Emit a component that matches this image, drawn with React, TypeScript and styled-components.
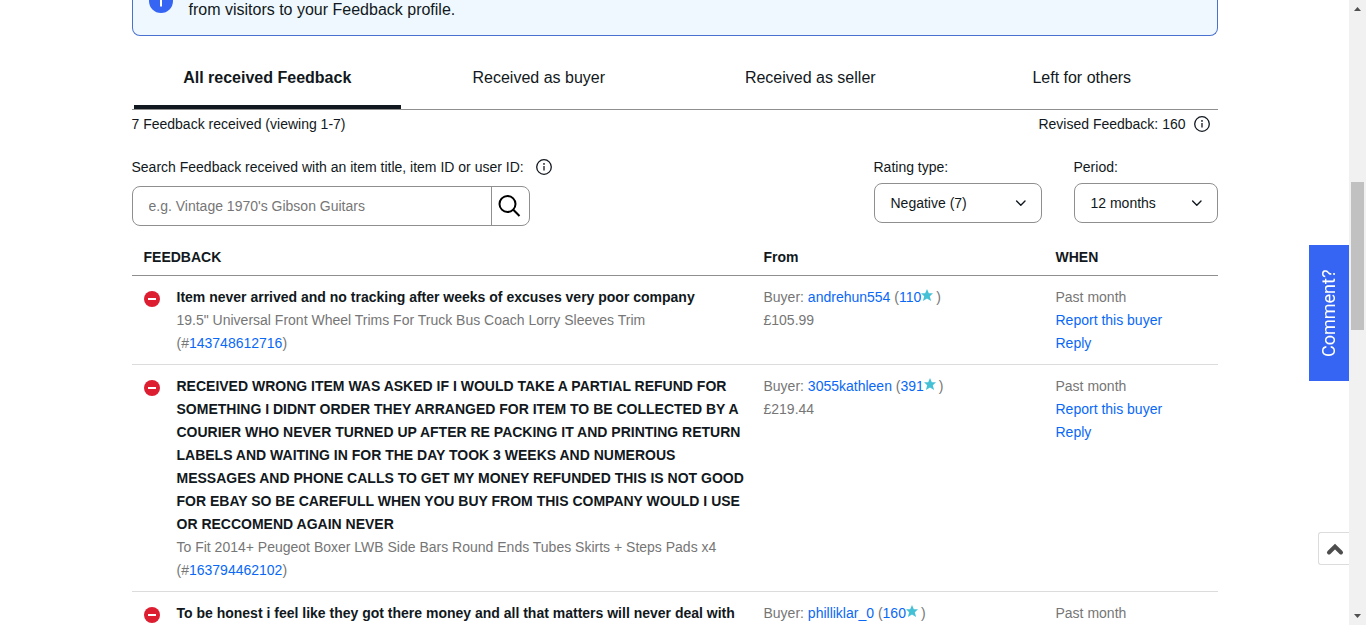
import React from 'react';
import styled, { createGlobalStyle } from 'styled-components';

const GlobalStyle = createGlobalStyle`
  *, *::before, *::after { box-sizing: border-box; }
  body {
    margin: 0;
    overflow: hidden;
    background: #fff;
    color: #111820;
    font: 14px/23px "Liberation Sans", Arial, sans-serif;
  }
  a { color: #0968f6; text-decoration: none; }
  button, input, select { font: inherit; color: inherit; margin: 0; }
`;

const Viewport = styled.div`
  display: flex;
  height: 100vh;
  overflow: hidden;
`;

const Page = styled.main`
  flex: 1;
  min-width: 0;
  max-width: 1086px;
  margin: 0 auto;
`;

const Banner = styled.section`
  display: flex;
  align-items: flex-end;
  gap: 16px;
  height: 36px;
  padding: 0 16px 13px;
  overflow: hidden;
  border: 1px solid #4a70d0;
  border-top: 0;
  border-radius: 0 0 8px 8px;
  background: #f0f8ff;
  font-size: 16px;
  line-height: 24px;

  svg { flex: none; margin-bottom: 9px; }
  p { margin: 0; }
`;

const Tabs = styled.div`
  display: grid;
  grid-template-columns: repeat(4, 1fr);
  margin-top: 10px;
  border-bottom: 1px solid #8f8f8f;
`;

const Tab = styled.button<{ $active?: boolean }>`
  height: 63px;
  margin: 0 2px;
  padding: 4px 0 0;
  border: 0;
  border-bottom: 4px solid ${p => (p.$active ? '#111820' : 'transparent')};
  background: none;
  font-size: 16px;
  font-weight: ${p => (p.$active ? 700 : 400)};
`;

const Summary = styled.div`
  display: flex;
  justify-content: space-between;
  padding: 3px 8px 0 0;
`;

const WithIcon = styled.span<{ $gap: number }>`
  display: flex;
  align-items: center;
  gap: ${p => p.$gap}px;
  white-space: nowrap;

  svg { flex: none; margin-bottom: 1px; }
`;

const Filters = styled.form`
  display: flex;
  gap: 32px;
  margin-top: 20px;
`;

const Field = styled.div<{ $width: number; $gap: number; $push?: boolean }>`
  display: flex;
  flex-direction: column;
  gap: ${p => p.$gap}px;
  width: ${p => p.$width}px;
  margin-right: ${p => (p.$push ? 'auto' : 0)};
`;

const SearchBox = styled.div`
  display: flex;
  width: 398px;
  height: 40px;
  overflow: hidden;
  border: 1px solid #8f8f8f;
  border-radius: 8px;
`;

const SearchInput = styled.input`
  flex: 1;
  min-width: 0;
  padding: 0 16px;
  border: 0;
  outline: 0;
  background: none;

  &::placeholder { color: #767676; opacity: 1; }
`;

const SearchButton = styled.button`
  display: flex;
  align-items: center;
  justify-content: center;
  width: 38px;
  padding: 0;
  border: 0;
  border-left: 1px solid #8f8f8f;
  background: none;
`;

const SelectBox = styled.div`
  display: grid;
  align-items: center;

  > * { grid-area: 1 / 1; }
  svg { justify-self: end; margin-right: 15px; pointer-events: none; }
`;

const Select = styled.select`
  width: 100%;
  height: 40px;
  padding: 0 36px 0 16px;
  border: 1px solid #8f8f8f;
  border-radius: 8px;
  background: #fff;
  appearance: none;
`;

const Table = styled.table`
  width: 100%;
  margin-top: 10px;
  border-collapse: separate;
  border-spacing: 0;
  table-layout: fixed;
`;

const FromCol = styled.col` width: 292px; `;
const WhenCol = styled.col` width: 174px; `;

const HeadCell = styled.th`
  padding: 10px 12px 6px;
  border-bottom: 1px solid #8f8f8f;
  text-align: left;
`;

const Cell = styled.td`
  padding: 10px 0 9px 12px;
  border-bottom: 1px solid #dcdcdc;
  color: #767676;
  vertical-align: top;
`;

const Entry = styled.div`
  display: flex;
  gap: 17px;

  > svg { flex: none; margin-top: 5px; }
`;

const Comment = styled.div`
  color: #111820;
  font-weight: 700;
`;

const Stack = styled.div`
  display: flex;
  flex-direction: column;
  align-items: flex-start;
`;

const StarIcon = styled.svg`
  margin-right: 3px;
  vertical-align: 1px;
`;

const CommentTab = styled.button`
  position: fixed;
  right: 17px;
  top: 50%;
  width: 40px;
  height: 136px;
  padding: 0;
  border: 0;
  background: #3665f3;
  color: #fff;
  font: 400 18px/40px Roboto, sans-serif;
  writing-mode: vertical-rl;
  transform: translateY(-50%) rotate(180deg);
`;

const BackToTop = styled.button`
  position: fixed;
  right: 17px;
  bottom: 60px;
  display: flex;
  align-items: center;
  justify-content: center;
  width: 31px;
  height: 33px;
  padding: 0 0 0 2px;
  border: 1px solid #dcdcdc;
  border-right: 0;
  border-radius: 3px 0 0 3px;
  background: #fff;
`;

const ScrollTrack = styled.div`
  display: flex;
  flex-direction: column;
  align-items: center;
  width: 17px;
  padding: 6px 0;
  background: #f1f1f1;
`;

const ScrollSpace = styled.div<{ $grow: number }>`
  flex: ${p => p.$grow} 1 0;
`;

const ScrollThumb = styled(ScrollSpace)`
  width: 13px;
  background: #c1c1c1;
`;

const InfoIcon = () => (
  <svg width="16" height="16" viewBox="0 0 16 16" aria-hidden="true">
    <circle cx="8" cy="8" r="7.3" fill="none" stroke="#111820" strokeWidth="1.3" />
    <path d="M8 7v4.500" stroke="#111820" strokeWidth="1.3" />
    <circle cx="8" cy="4.9" r="0.9" fill="#111820" />
  </svg>
);

const NegativeIcon = () => (
  <svg width="16" height="16" viewBox="0 0 16 16" role="img" aria-label="Negative feedback">
    <circle cx="8" cy="8" r="8" fill="#dd1e31" />
    <path d="M4 8h8" stroke="#fff" strokeWidth="2" />
  </svg>
);

const Chevron = () => (
  <svg width="12" height="8" viewBox="0 0 12 8" aria-hidden="true">
    <path d="M1.6 2 5.800 6.200l4.200-4.200" fill="none" stroke="#111820" strokeWidth="1.4" strokeLinecap="round" strokeLinejoin="round" />
  </svg>
);

const Star = () => (
  <StarIcon width="12" height="12" viewBox="0 0 12 12" aria-hidden="true">
    <path d="M6 0l1.800 4.200H12L8.800 7.200l1.300 4.800L6 9.500 1.900 12l1.300-4.800L0 4.200h4.200z" fill="#45c1d6" />
  </StarIcon>
);

const ScrollArrow = ({ down }: { down?: boolean }) => (
  <svg width="7" height="5" viewBox="0 0 7 5" aria-hidden="true">
    <path d={down ? 'M0 0h7L3.500 4z' : 'M0 5h7L3.500 1z'} fill="#505050" />
  </svg>
);

interface Feedback {
  comment: string;
  item?: string;
  itemId?: string;
  buyer: string;
  score: number;
  price?: string;
}

const feedback: Feedback[] = [
  {
    comment: 'Item never arrived and no tracking after weeks of excuses very poor company',
    item: '19.5" Universal Front Wheel Trims For Truck Bus Coach Lorry Sleeves Trim',
    itemId: '143748612716',
    buyer: 'andrehun554',
    score: 110,
    price: '£105.99',
  },
  {
    comment:
      'RECEIVED WRONG ITEM WAS ASKED IF I WOULD TAKE A PARTIAL REFUND FOR SOMETHING I DIDNT ORDER THEY ARRANGED FOR ITEM TO BE COLLECTED BY A COURIER WHO NEVER TURNED UP AFTER RE PACKING IT AND PRINTING RETURN LABELS AND WAITING IN FOR THE DAY TOOK 3 WEEKS AND NUMEROUS MESSAGES AND PHONE CALLS TO GET MY MONEY REFUNDED THIS IS NOT GOOD FOR EBAY SO BE CAREFULL WHEN YOU BUY FROM THIS COMPANY WOULD I USE OR RECCOMEND AGAIN NEVER',
    item: 'To Fit 2014+ Peugeot Boxer LWB Side Bars Round Ends Tubes Skirts + Steps Pads x4',
    itemId: '163794462102',
    buyer: '3055kathleen',
    score: 391,
    price: '£219.44',
  },
  {
    comment: 'To be honest i feel like they got there money and all that matters will never deal with',
    buyer: 'philliklar_0',
    score: 160,
  },
];

export default function App() {
  return (
    <>
      <GlobalStyle />
      <Viewport>
        <Page>
          <Banner>
            <svg width="24" height="24" viewBox="0 0 24 24" aria-hidden="true">
              <circle cx="12" cy="12" r="12" fill="#3665f3" />
              <path d="M12 10v7.500" stroke="#fff" strokeWidth="2" />
              <circle cx="12" cy="7" r="1.300" fill="#fff" />
            </svg>
            <p>from visitors to your Feedback profile.</p>
          </Banner>

          <Tabs role="tablist">
            <Tab role="tab" aria-selected="true" $active>All received Feedback</Tab>
            <Tab role="tab" aria-selected="false">Received as buyer</Tab>
            <Tab role="tab" aria-selected="false">Received as seller</Tab>
            <Tab role="tab" aria-selected="false">Left for others</Tab>
          </Tabs>

          <Summary>
            <span>7 Feedback received (viewing 1-7)</span>
            <WithIcon $gap={8}>Revised Feedback: 160 <InfoIcon /></WithIcon>
          </Summary>

          <Filters onSubmit={e => e.preventDefault()}>
            <Field $width={424} $gap={7} $push>
              <WithIcon $gap={12}>
                <label htmlFor="search">Search Feedback received with an item title, item ID or user ID:</label>
                <InfoIcon />
              </WithIcon>
              <SearchBox>
                <SearchInput id="search" type="text" placeholder="e.g. Vintage 1970's Gibson Guitars" />
                <SearchButton aria-label="Search">
                  <svg width="24" height="24" viewBox="0 0 24 24" fill="none" stroke="#000" strokeWidth="2" aria-hidden="true">
                    <circle cx="9.500" cy="10" r="8" />
                    <path d="M15.300 15.800 21.500 22" />
                  </svg>
                </SearchButton>
              </SearchBox>
            </Field>
            <Field $width={168} $gap={4}>
              <label htmlFor="rating">Rating type:</label>
              <SelectBox>
                <Select id="rating"><option>Negative (7)</option></Select>
                <Chevron />
              </SelectBox>
            </Field>
            <Field $width={144} $gap={4}>
              <label htmlFor="period">Period:</label>
              <SelectBox>
                <Select id="period"><option>12 months</option></Select>
                <Chevron />
              </SelectBox>
            </Field>
          </Filters>

          <Table>
            <colgroup><col /><FromCol /><WhenCol /></colgroup>
            <thead>
              <tr>
                <HeadCell scope="col">FEEDBACK</HeadCell>
                <HeadCell scope="col">From</HeadCell>
                <HeadCell scope="col">WHEN</HeadCell>
              </tr>
            </thead>
            <tbody>
              {feedback.map(f => (
                <tr key={f.buyer}>
                  <Cell>
                    <Entry>
                      <NegativeIcon />
                      <div>
                        <Comment>{f.comment}</Comment>
                        {f.item && <div>{f.item}</div>}
                        {f.itemId && <div>(#<a href="#item">{f.itemId}</a>)</div>}
                      </div>
                    </Entry>
                  </Cell>
                  <Cell>
                    <div>
                      Buyer: <a href="#buyer">{f.buyer}</a> (<a href="#score">{f.score}</a><Star />)
                    </div>
                    {f.price && <div>{f.price}</div>}
                  </Cell>
                  <Cell>
                    <Stack>
                      <span>Past month</span>
                      {f.price && <a href="#report">Report this buyer</a>}
                      {f.price && <a href="#reply">Reply</a>}
                    </Stack>
                  </Cell>
                </tr>
              ))}
            </tbody>
          </Table>
        </Page>

        <ScrollTrack aria-hidden="true">
          <ScrollArrow />
          <ScrollSpace $grow={171} />
          <ScrollThumb $grow={148} />
          <ScrollSpace $grow={284} />
          <ScrollArrow down />
        </ScrollTrack>
      </Viewport>

      <CommentTab>Comment?</CommentTab>
      <BackToTop aria-label="Back to top">
        <svg width="18" height="14" viewBox="0 0 18 14" aria-hidden="true">
          <path d="M3 10.500 9 4.500l6 6" fill="none" stroke="#4d4d4d" strokeWidth="4" strokeLinecap="round" />
        </svg>
      </BackToTop>
    </>
  );
}
